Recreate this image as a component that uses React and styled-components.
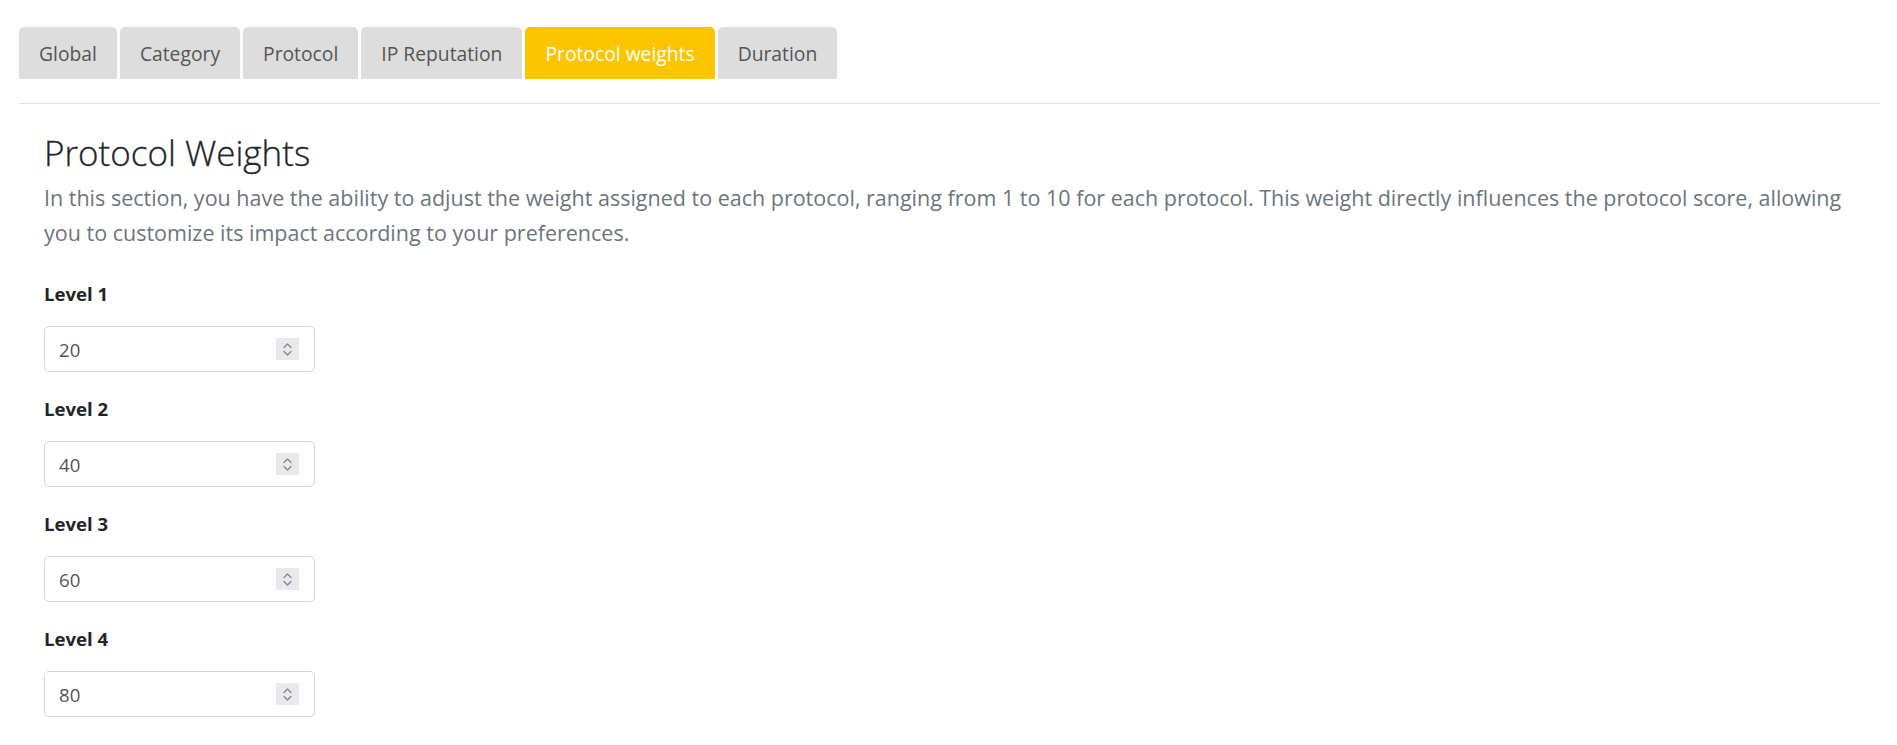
import React, { useState } from 'react';
import styled, { createGlobalStyle } from 'styled-components';

const GlobalStyle = createGlobalStyle`
    body {
        margin: 0;
        background: #ffffff;
        font-family: 'Open Sans', 'Noto Sans', sans-serif;
        color: #212529;
    }
    * {
        box-sizing: border-box;
    }
`;

const Page = styled.div`
    padding: 27px 17px 0 19px;
`;

const TabBar = styled.nav`
    display: flex;
    gap: 3px;
`;

const Tab = styled.button`
    height: 52px;
    padding: 0 20px;
    border: none;
    border-radius: 5px 5px 0 0;
    background-color: ${({ active }) => active ? '#fcc500' : '#dddddd'};
    color: ${({ active }) => active ? '#ffffff' : '#555555'};
    font-family: inherit;
    font-size: 19.3px;
    cursor: pointer;
`;

const Divider = styled.hr`
    margin: 24px 0 0;
    border: none;
    border-top: 1px solid #dee2e6;
`;

const Content = styled.section`
    padding: 28px 25px 0;
`;

const Title = styled.h3`
    margin: 0 0 6px;
    font-size: 35px;
    font-weight: 300;
    line-height: 1.2;
    color: #212529;
    -webkit-text-stroke: 0.3px #212529;
`;

const Lead = styled.p`
    margin: 0 0 30px;
    font-size: 21.5px;
    line-height: 35px;
    color: #6c757d;
`;

const Field = styled.div`
    display: flex;
    flex-direction: column;
    align-items: flex-start;
    margin-bottom: 23px;
`;

const Label = styled.label`
    font-size: 18.6px;
    font-weight: 700;
    line-height: 28px;
    margin-bottom: 18px;
    color: #212529;
`;

const InputBox = styled.div`
    display: flex;
    align-items: center;
    width: 271px;
    height: 46px;
    padding: 0 15px 0 14px;
    border: 1px solid #d3d3da;
    border-radius: 5px;
    background: #ffffff;
`;

const NumberInput = styled.input`
    flex: 1;
    min-width: 0;
    border: none;
    outline: none;
    padding: 0;
    font-family: inherit;
    font-size: 18.6px;
    color: #555555;
    background: transparent;
    -moz-appearance: textfield;
    &::-webkit-inner-spin-button,
    &::-webkit-outer-spin-button {
        -webkit-appearance: none;
        margin: 0;
    }
`;

const Spinner = styled.span`
    display: flex;
    flex-direction: column;
    align-items: center;
    justify-content: center;
    width: 23px;
    height: 22px;
    background: #e9e9ed;
`;

const Chevrons = () => (
    <svg width="11" height="15" viewBox="0 0 11 15" fill="none" stroke="#85858f" strokeWidth="1.3" strokeLinecap="round" strokeLinejoin="round">
        <path d="M2 5.5 L5.5 2 L9 5.5" />
        <path d="M2 9.5 L5.5 13 L9 9.5" />
    </svg>
);

const tabs = ['Global', 'Category', 'Protocol', 'IP Reputation', 'Protocol weights', 'Duration'];

const levels = [
    { label: 'Level 1', value: 20 },
    { label: 'Level 2', value: 40 },
    { label: 'Level 3', value: 60 },
    { label: 'Level 4', value: 80 },
];

const App = () => {
    const [current, setCurrent] = useState('Protocol weights');

    return (
        <Page>
            <GlobalStyle />
            <TabBar>
                {tabs.map(tab => (
                    <Tab key={tab} active={tab === current ? 1 : 0} onClick={() => setCurrent(tab)}>
                        {tab}
                    </Tab>
                ))}
            </TabBar>
            <Divider />
            <Content>
                <Title>Protocol Weights</Title>
                <Lead>
                    In this section, you have the ability to adjust the weight assigned to each protocol, ranging from 1 to 10 for each protocol. This weight directly influences the protocol score, allowing you to customize its impact according to your preferences.
                </Lead>
                {levels.map(level => (
                    <Field key={level.label}>
                        <Label>{level.label}</Label>
                        <InputBox>
                            <NumberInput type="number" defaultValue={level.value} min="1" />
                            <Spinner><Chevrons /></Spinner>
                        </InputBox>
                    </Field>
                ))}
            </Content>
        </Page>
    );
};

export default App;
